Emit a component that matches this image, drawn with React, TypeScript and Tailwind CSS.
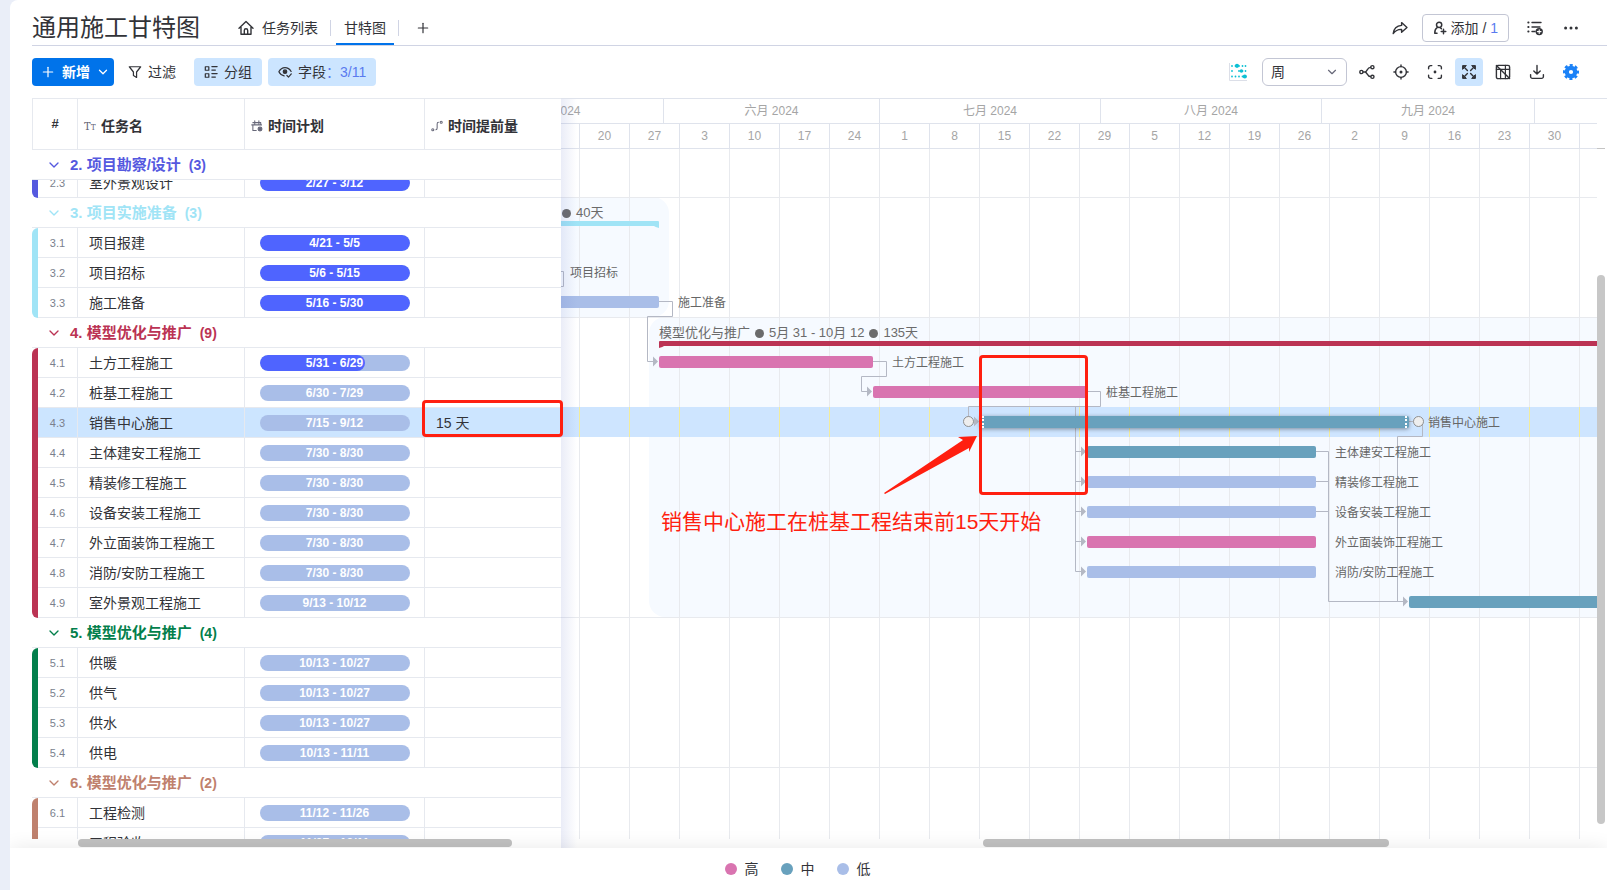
import { Fragment } from "react";
import type { ReactNode } from "react";
import clsx from "clsx";
import { ChevronDown, Plus } from "lucide-react";

type Priority = "high" | "mid" | "low";

type Task = {
  id: string;
  name: string;
  plan: string;
  progress?: number;
  lead?: string;
  selected?: boolean;
};

type Group = {
  title: string;
  count: number;
  text: string;
  strip: string;
  clipped?: boolean;
  tasks: Task[];
};

const groups: Group[] = [
  {
    title: "2. 项目勘察/设计",
    count: 3,
    text: "text-[#5559df]",
    strip: "bg-[#5559df] rounded-bl-md",
    clipped: true,
    tasks: [{ id: "2.3", name: "室外景观设计", plan: "2/27 - 3/12", progress: 100 }],
  },
  {
    title: "3. 项目实施准备",
    count: 3,
    text: "text-[#a0e4f6]",
    strip: "bg-[#a0e4f6] rounded-l-md",
    tasks: [
      { id: "3.1", name: "项目报建", plan: "4/21 - 5/5", progress: 100 },
      { id: "3.2", name: "项目招标", plan: "5/6 - 5/15", progress: 100 },
      { id: "3.3", name: "施工准备", plan: "5/16 - 5/30", progress: 100 },
    ],
  },
  {
    title: "4. 模型优化与推广",
    count: 9,
    text: "text-[#bb3354]",
    strip: "bg-[#bb3354] rounded-l-md",
    tasks: [
      { id: "4.1", name: "土方工程施工", plan: "5/31 - 6/29", progress: 70 },
      { id: "4.2", name: "桩基工程施工", plan: "6/30 - 7/29" },
      { id: "4.3", name: "销售中心施工", plan: "7/15 - 9/12", lead: "15 天", selected: true },
      { id: "4.4", name: "主体建安工程施工", plan: "7/30 - 8/30" },
      { id: "4.5", name: "精装修工程施工", plan: "7/30 - 8/30" },
      { id: "4.6", name: "设备安装工程施工", plan: "7/30 - 8/30" },
      { id: "4.7", name: "外立面装饰工程施工", plan: "7/30 - 8/30" },
      { id: "4.8", name: "消防/安防工程施工", plan: "7/30 - 8/30" },
      { id: "4.9", name: "室外景观工程施工", plan: "9/13 - 10/12" },
    ],
  },
  {
    title: "5. 模型优化与推广",
    count: 4,
    text: "text-[#037f4c]",
    strip: "bg-[#037f4c] rounded-l-md",
    tasks: [
      { id: "5.1", name: "供暖", plan: "10/13 - 10/27" },
      { id: "5.2", name: "供气", plan: "10/13 - 10/27" },
      { id: "5.3", name: "供水", plan: "10/13 - 10/27" },
      { id: "5.4", name: "供电", plan: "10/13 - 11/11" },
    ],
  },
  {
    title: "6. 模型优化与推广",
    count: 2,
    text: "text-[#bf816e]",
    strip: "bg-[#bf816e] rounded-tl-md",
    tasks: [
      { id: "6.1", name: "工程检测", plan: "11/12 - 11/26" },
      { id: "6.2", name: "工程验收", plan: "11/27 - 12/11" },
    ],
  },
];

const months = [
  { label: "五月 2024", width: "w-[220px]" },
  { label: "六月 2024", width: "w-[216px]" },
  { label: "七月 2024", width: "w-[221px]" },
  { label: "八月 2024", width: "w-[221px]" },
  { label: "九月 2024", width: "w-[213px]" },
  { label: "", width: "w-[221px]" },
];

const weeks = [13, 20, 27, 3, 10, 17, 24, 1, 8, 15, 22, 29, 5, 12, 19, 26, 2, 9, 16, 23, 30, 7];

// days are counted from July 1st, rows from the top of the chart body
const dayX = (day: number) => Math.round(319 + (day * 50) / 7);

const bars: {
  name: string;
  from: number;
  to: number;
  top: number;
  priority: Priority;
  selected?: boolean;
}[] = [
  { name: "项目招标", from: -56, to: -46, top: 117, priority: "mid" },
  { name: "施工准备", from: -46, to: -31, top: 147, priority: "low" },
  { name: "土方工程施工", from: -31, to: -1, top: 207, priority: "high" },
  { name: "桩基工程施工", from: -1, to: 29, top: 237, priority: "high" },
  { name: "销售中心施工", from: 14, to: 74, top: 267, priority: "mid", selected: true },
  { name: "主体建安工程施工", from: 29, to: 61, top: 297, priority: "mid" },
  { name: "精装修工程施工", from: 29, to: 61, top: 327, priority: "low" },
  { name: "设备安装工程施工", from: 29, to: 61, top: 357, priority: "low" },
  { name: "外立面装饰工程施工", from: 29, to: 61, top: 387, priority: "high" },
  { name: "消防/安防工程施工", from: 29, to: 61, top: 417, priority: "low" },
  { name: "室外景观工程施工", from: 74, to: 104, top: 447, priority: "mid" },
];

const priorityBg: Record<Priority, string> = {
  high: "bg-[#d974b0]",
  mid: "bg-[#68a1bd]",
  low: "bg-[#a9bee8]",
};

const links = [
  "M-10 122.5H2.5V137.5H-10",
  "M98 152.5H111.5V167.5H86.5V212.5H92",
  "M312 212.5H325.5V227.5H300.5V242.5H306",
  "M526 242.5H539.5V257.5H407.5V272.5H413",
  "M514.5 257.5V422.5H520M514.5 302.5H520M514.5 332.5H520M514.5 362.5H520M514.5 392.5H520",
  "M848 272.5H861.5V287.5H836.5V452.5",
  "M755 302.5H767.5V452.5H842M755 332.5H767.5M755 362.5H767.5",
];

const arrows = [
  [92, 212],
  [306, 242],
  [413, 272],
  [520, 302],
  [520, 332],
  [520, 362],
  [520, 392],
  [520, 422],
  [842, 452],
];

function Icon({ children, className = "size-4" }: { children: ReactNode; className?: string }) {
  return (
    <svg
      viewBox="0 0 16 16"
      className={clsx("shrink-0", className)}
      fill="none"
      stroke="currentColor"
      strokeWidth="1.4"
      strokeLinecap="round"
      strokeLinejoin="round"
      aria-hidden="true"
    >
      {children}
    </svg>
  );
}

function IconButton({
  label,
  active,
  children,
}: {
  label: string;
  active?: boolean;
  children: ReactNode;
}) {
  return (
    <button
      type="button"
      aria-label={label}
      className={clsx(
        "flex size-7 shrink-0 items-center justify-center rounded",
        active && "bg-[#cce5ff]"
      )}
    >
      {children}
    </button>
  );
}

function TopBar() {
  return (
    <header className="flex h-[46px] items-center border-b border-[#d0d4e4] pr-[22px]">
      <h1 className="pt-2.5 text-2xl text-[#323338]">通用施工甘特图</h1>
      <nav className="ml-[38px] flex h-full items-center text-sm">
        <a href="#list" className="flex items-center gap-2 pt-2.5">
          <Icon>
            <path d="M1 8.2 8 1.6l7 6.6M3 7v7.3h10V7M6.3 14v-3.6a1.7 1.7 0 0 1 3.4 0V14" />
          </Icon>
          任务列表
        </a>
        <span className="mt-2.5 ml-3 h-4 w-px bg-[#d0d4e4]" />
        <a
          href="#gantt"
          className="ml-[5px] flex h-full items-center border-b-2 border-[#0073ea] px-2 pt-3"
        >
          甘特图
        </a>
        <span className="mt-2.5 ml-1 h-4 w-px bg-[#d0d4e4]" />
        <button type="button" aria-label="添加视图" className="ml-4 pt-2.5">
          <Plus className="size-4" strokeWidth={1.8} />
        </button>
      </nav>
      <div className="ml-auto flex items-center gap-2 pt-2.5">
        <IconButton label="分享">
          <Icon>
            <path d="M9.6 2.6 15 7.4l-5.4 4.8V9.4C6 9.2 3.4 10.6 1.2 13.6 1.7 9 4.6 5.8 9.6 5.4z" />
          </Icon>
        </IconButton>
        <button
          type="button"
          className="flex h-7 items-center gap-1 rounded border border-[#c3c6d4] px-2.5 text-sm"
        >
          <Icon className="size-3.5">
            <circle cx="7" cy="4.4" r="3" strokeWidth="1.7" />
            <path
              d="M4.8 7.6C2.6 8.8 2 10.4 2 14h2.6M12 9.4v5.2M9.4 12h5.2M8.6 8l1 .8"
              strokeWidth="1.7"
            />
          </Icon>
          <span className="whitespace-nowrap">
            添加 / <span className="text-[#5a7bef]">1</span>
          </span>
        </button>
        <div className="ml-1 flex items-center gap-2">
          <IconButton label="活动记录">
            <Icon>
              <path d="M5 2.5h9M5 7h8M5 11.5h3" />
              <path d="M1.2 2.5h.4M1.2 7h.4M1.2 11.5h.4" strokeWidth="1.8" />
              <circle cx="12.2" cy="11.6" r="3.7" fill="currentColor" stroke="none" />
              <path d="M12.2 9.8v3.6M10.4 11.6H14" stroke="#fff" strokeWidth="1.1" />
            </Icon>
          </IconButton>
          <IconButton label="更多">
            <Icon>
              <g fill="currentColor" stroke="none">
                <circle cx="2.6" cy="8" r="1.5" />
                <circle cx="8" cy="8" r="1.5" />
                <circle cx="13.4" cy="8" r="1.5" />
              </g>
            </Icon>
          </IconButton>
        </div>
      </div>
    </header>
  );
}

function Toolbar() {
  return (
    <div className="flex items-center gap-1.5 py-3 pr-[22px] text-sm whitespace-nowrap">
      <button
        type="button"
        className="flex h-7 items-center gap-1.5 rounded bg-[#0073ea] px-2 pr-1 font-bold text-white"
      >
        <Plus className="size-4" strokeWidth={1.8} />
        新增
        <ChevronDown className="size-3.5" strokeWidth={2.2} />
      </button>
      <button type="button" className="flex h-7 items-center gap-1.5 px-2">
        <Icon className="size-3.5">
          <path d="M1.5 2h13L9.8 8v6.2L6.2 12V8z" />
        </Icon>
        过滤
      </button>
      <button
        type="button"
        className="ml-1 flex h-7 items-center gap-1.5 rounded bg-[#cce5ff] px-2.5"
      >
        <Icon className="size-3.5">
          <path d="M1.5 2h4v4h-4zM1.5 10h4v4h-4zM9 1.8h6M9 5.8h4M9 9.8h6M9 13.8h4" />
        </Icon>
        分组
      </button>
      <button type="button" className="flex h-7 items-center gap-1.5 rounded bg-[#cce5ff] px-2.5">
        <Icon className="size-3.5">
          <path d="M15 7.4C13.4 4.6 11 3 8 3S2.6 4.6 1 7.8c1.4 2.7 3.5 4.2 6 4.6" />
          <circle cx="8" cy="7.6" r="2" fill="currentColor" />
          <path d="m10.2 12 1.8 1.8 3.2-3.6" />
        </Icon>
        <span>
          字段<span className="text-[#5a7bef]">：3/11</span>
        </span>
      </button>

      <div className="ml-auto flex items-center gap-1.5">
        <IconButton label="基线">
          <svg viewBox="0 0 18 18" className="size-[18px]" fill="#0bc0d4" aria-hidden="true">
            <path d="M.5 0v17.5H18" fill="none" stroke="#dcdfe8" />
            {[3, 8, 13.5].map((y) =>
              [3, 6.5, 10, 13.5, 16.5].map((x) => (
                <circle key={`${x}-${y}`} cx={x} cy={y} r={x === 6.5 && y === 8 ? 0 : 0.9} />
              ))
            )}
            <circle cx="8" cy="2.8" r="2.1" />
            <circle cx="12.4" cy="8" r="1.8" />
            <circle cx="15.8" cy="13.5" r="2.1" />
          </svg>
        </IconButton>
        <label className="relative ml-1 flex items-center">
          <select
            aria-label="时间刻度"
            defaultValue="week"
            className="h-7 w-[85px] appearance-none rounded-md border border-[#c3c6d4] bg-white px-2 text-sm"
          >
            <option value="week">周</option>
            <option value="month">月</option>
          </select>
          <ChevronDown className="pointer-events-none absolute right-2 size-3.5 text-[#676879]" />
        </label>
        <IconButton label="依赖">
          <Icon>
            <circle cx="2.4" cy="8" r="1.6" />
            <circle cx="13.4" cy="3.2" r="1.6" />
            <circle cx="13.4" cy="12.8" r="1.6" />
            <path d="M4.200 8H6M11.600 3.400C8 3.400 8.200 8 6 8c2.200 0 2 4.600 5.600 4.600" />
          </Icon>
        </IconButton>
        <IconButton label="今天">
          <Icon>
            <circle cx="8" cy="8" r="5.4" />
            <circle cx="8" cy="8" r=".8" fill="currentColor" />
            <path d="M8 .9v1.7M8 13.4v1.7M.9 8h1.7M13.4 8h1.7" />
          </Icon>
        </IconButton>
        <IconButton label="聚焦">
          <Icon>
            <path d="M4.8 1.6H3.6a2 2 0 0 0-2 2v1.2M11.2 1.6h1.2a2 2 0 0 1 2 2v1.2M4.8 14.4H3.600a2 2 0 0 1-2-2v-1.200M11.200 14.400h1.200a2 2 0 0 0 2-2v-1.200" />
            <circle cx="8" cy="8" r=".7" fill="currentColor" />
          </Icon>
        </IconButton>
        <IconButton label="自适应" active>
          <Icon>
            <g fill="currentColor" strokeWidth="1">
              <path d="M1.6 5V1.6H5zM11 1.6h3.4V5zM14.4 11v3.4H11zM5 14.4H1.6V11z" />
            </g>
            <path d="m3 3 3.4 3.4M13 3 9.6 6.4M13 13 9.600 9.600M3 13l3.400-3.400" />
          </Icon>
        </IconButton>
        <IconButton label="隐藏表格">
          <Icon>
            <rect x="1.400" y="1.400" width="13.200" height="13.200" rx="1.600" />
            <path d="M1.400 5.400h13.200M5.600 5.400v9.200M10.400 1.400v13.200" strokeWidth="1.200" />
            <path d="m1.400 1.400 13.200 13.200" />
          </Icon>
        </IconButton>
        <IconButton label="导出">
          <Icon>
            <path d="M8 1.5v8.3M4.8 6.900 8 10.100l3.200-3.200M1.600 10.600v2a1.800 1.800 0 0 0 1.800 1.800h9.200a1.800 1.800 0 0 0 1.800-1.800v-2" />
          </Icon>
        </IconButton>
        <IconButton label="设置">
          <svg viewBox="0 0 16 16" className="size-4 text-[#1b82f7]" aria-hidden="true">
            <circle
              cx="8"
              cy="8"
              r="6.7"
              fill="none"
              stroke="currentColor"
              strokeWidth="2.6"
              strokeDasharray="3 2.262"
              strokeDashoffset="1.5"
            />
            <circle cx="8" cy="8" r="4.2" fill="none" stroke="currentColor" strokeWidth="4.2" />
          </svg>
        </IconButton>
      </div>
    </div>
  );
}

function PlanPill({ plan, progress = 0 }: { plan: string; progress?: number }) {
  return (
    <div className="relative mx-auto h-4 w-[150px] overflow-hidden rounded-full bg-[#a9bee8]">
      <div className="h-full rounded-full bg-[#4f64ff]" style={{ width: `${progress}%` }} />
      <span className="absolute inset-0 text-center text-xs leading-4 font-bold text-white">
        {plan}
      </span>
    </div>
  );
}

function TaskTable() {
  return (
    <table className="w-full table-fixed border-separate border-spacing-0 text-sm">
      <colgroup>
        <col className="w-1.5" />
        <col className="w-10" />
        <col className="w-[167px]" />
        <col className="w-[180px]" />
        <col />
      </colgroup>
      <thead>
        <tr className="h-[52px] text-left">
          <th
            colSpan={2}
            className="border border-[#e6e9ef] text-center text-[13px] text-[#323338]"
          >
            #
          </th>
          <th className="border-y border-r border-[#e6e9ef] pt-1 pl-1.5">
            <span className="flex items-center gap-[5px]">
              <span className="flex w-3 items-baseline font-serif text-xs font-normal text-[#676879]">
                T<span className="text-[9px]">T</span>
              </span>
              任务名
            </span>
          </th>
          <th className="border-y border-r border-[#e6e9ef] pt-1 pl-1.5">
            <span className="flex items-center gap-[5px]">
              <Icon className="size-3 text-[#676879]">
                <path d="M1 6.500h13M2.500 3.500H13v3M2.500 6.500V14H7M5 1v4M10.500 1v4" />
                <circle cx="12" cy="12" r="2.600" fill="currentColor" />
              </Icon>
              时间计划
            </span>
          </th>
          <th className="border-y border-[#e6e9ef] pt-1 pl-1.5">
            <span className="flex items-center gap-[5px]">
              <Icon className="size-3 text-[#676879]">
                <circle cx="2.400" cy="13" r="1.400" />
                <circle cx="13.600" cy="3" r="1.400" />
                <path d="M6.500 13c1.600 0 1.700-.8 1.700-2.200V5.200C8.200 3.800 8.300 3 9.900 3" />
              </Icon>
              时间提前量
            </span>
          </th>
        </tr>
      </thead>
      <tbody>
        {groups.map((group) => (
          <Fragment key={group.title}>
            <tr className={clsx("h-[30px]", group.text)}>
              <th colSpan={5} className="border-b border-[#e6e9ef] p-0 pl-3.5 text-left">
                <button
                  type="button"
                  className="flex items-center gap-2 text-[15px] leading-5 font-bold"
                >
                  <ChevronDown className="size-4" strokeWidth={2} />
                  <span className="flex gap-2">
                    {group.title}
                    <span className="text-sm leading-5">({group.count})</span>
                  </span>
                </button>
              </th>
            </tr>
            {group.tasks.map((task, idx) => (
              <tr key={task.id} className={group.clipped ? "h-[18px]" : "h-[30px]"}>
                {idx === 0 && (
                  <td rowSpan={group.tasks.length} className={clsx("p-0", group.strip)} />
                )}
                {[
                  <span className="block w-full pt-0.5 text-center text-[11px] text-[#7a7f8d]">
                    {task.id}
                  </span>,
                  <span className="block pl-[11px] text-[#323338]">{task.name}</span>,
                  <PlanPill plan={task.plan} progress={task.progress} />,
                  <span className="block pl-[11px] text-[#323338]">{task.lead}</span>,
                ].map((cell, col) => (
                  <td
                    key={col}
                    className={clsx(
                      "border-b border-[#e6e9ef] p-0",
                      col < 3 && "border-r",
                      task.selected && "bg-[#cce5ff]"
                    )}
                  >
                    {group.clipped ? (
                      <div className="flex h-[17px] items-end overflow-hidden">
                        <div className="flex h-[29px] w-full shrink-0 items-center">{cell}</div>
                      </div>
                    ) : (
                      cell
                    )}
                  </td>
                ))}
              </tr>
            ))}
          </Fragment>
        ))}
      </tbody>
    </table>
  );
}

function TimelineHeader() {
  return (
    <div className="text-xs text-[#a5a5a5]">
      <div className="-ml-[118px] flex h-[25px] border-b border-[#dfe3ec]">
        {months.map((month, idx) => (
          <div
            key={idx}
            className={clsx(
              "flex shrink-0 items-center justify-center border-l border-[#dfe3ec]",
              month.width
            )}
          >
            {month.label}
          </div>
        ))}
      </div>
      <div className="-ml-[32px] flex h-[25px] border-b border-[#dfe3ec]">
        {weeks.map((day, idx) => (
          <div
            key={idx}
            className="flex w-[50px] shrink-0 items-center justify-center border-l border-[#dfe3ec]"
          >
            {day}
          </div>
        ))}
      </div>
    </div>
  );
}

function Dot() {
  return <i className="size-[9px] rounded-full bg-[#6b6b6b]" />;
}

function Chart() {
  return (
    <div className="relative flex-1 overflow-hidden">
      {/* group areas */}
      <div className="absolute top-[48px] -left-4 h-[120px] w-[124px] rounded-2xl bg-[#f6faff]" />
      <div className="absolute top-[168px] right-0 left-[88px] h-[300px] rounded-l-2xl bg-[#f6faff]" />

      {/* week lines */}
      <div className="absolute inset-0 bg-[linear-gradient(to_right,#e8eaee_1px,transparent_1px)] bg-[size:50px_100%] bg-[position:18px_0]" />
      <div className="absolute inset-x-0 top-[258px] h-[30px] bg-[#cee5ff]">
        <div className="h-full bg-[linear-gradient(to_right,#f3ec9c_1px,transparent_1px)] bg-[size:50px_100%] bg-[position:18px_0]" />
      </div>
      {[48, 168, 468, 618].map((top) => (
        <div key={top} className="absolute inset-x-0 h-px bg-[#e8eaee]" style={{ top }} />
      ))}

      {/* dependencies and group summaries */}
      <svg className="absolute inset-0 size-full" aria-hidden="true">
        <g fill="none" stroke="#b4b8c4">
          {links.map((d) => (
            <path key={d} d={d} />
          ))}
        </g>
        <g fill="#b4b8c4">
          {arrows.map(([x, y]) => (
            <path key={`${x}-${y}`} d={`M${x} ${y - 4.5}l5 5-5 5z`} />
          ))}
        </g>
        <path d="M-10 72H97q1 0 1 1V79q-4-1-5-2H-10z" fill="#a0e4f6" />
        <path d="M99 192H2000V197H103q-1 1-5 2V193q0-1 1-1z" fill="#bb3354" />
      </svg>

      {bars.map((bar) => {
        const left = dayX(bar.from);
        const right = dayX(bar.to);
        return (
          <Fragment key={bar.name}>
            <div
              className={clsx(
                "absolute flex h-3 justify-between rounded-xs px-0.5",
                priorityBg[bar.priority],
                bar.selected && "shadow-[0_1px_4px_rgba(0,0,0,0.4)]"
              )}
              style={{ left, top: bar.top, width: right - left }}
            >
              {bar.selected && (
                <>
                  <i className="border-l-2 border-dotted border-white" />
                  <i className="border-l-2 border-dotted border-white" />
                </>
              )}
            </div>
            <span
              className="absolute text-xs leading-3 whitespace-nowrap text-[#666]"
              style={{ left: right + 19, top: bar.top + 1 }}
            >
              {bar.name}
            </span>
          </Fragment>
        );
      })}
      <i className="absolute top-[267px] left-[402px] size-[11px] rounded-full border border-[#8f8f8f] bg-[#eee]" />
      <i className="absolute top-[267px] left-[852px] size-[11px] rounded-full border border-[#8f8f8f] bg-[#eee]" />

      <div className="absolute top-[56px] left-px flex items-center gap-[5px] text-[13px] leading-4 text-[#6b6b6b]">
        <Dot />
        40天
      </div>
      <div className="absolute top-[176px] left-[98px] flex items-center gap-[5px] text-[13px] leading-4 whitespace-nowrap text-[#6b6b6b]">
        模型优化与推广
        <Dot />
        5月 31 - 10月 12
        <Dot />
        135天
      </div>
    </div>
  );
}

function Annotations() {
  return (
    <div className="pointer-events-none absolute inset-0 z-20 overflow-hidden">
      <div className="absolute top-[302px] left-[390px] h-[37px] w-[141px] rounded-sm border-3 border-[#ff1f10]" />
      <div className="absolute top-[257px] left-[947px] h-[140px] w-[109px] rounded-sm border-3 border-[#ff1f10]" />
      <svg className="absolute top-[337px] left-[851px] h-[61px] w-[95px]" aria-hidden="true">
        <path d="M94 1 75 2l5 3L1 58l1 1 84-46v4z" fill="#ff1f10" />
      </svg>
      <p className="absolute top-[410px] left-[629px] text-[21px] leading-7 whitespace-nowrap text-[#ff1f10]">
        销售中心施工在桩基工程结束前15天开始
      </p>
    </div>
  );
}

function Legend() {
  const items = [
    { label: "高", color: "bg-[#d974b0]" },
    { label: "中", color: "bg-[#68a1bd]" },
    { label: "低", color: "bg-[#a9bee8]" },
  ];

  return (
    <footer className="relative z-10 flex h-[42px] items-center justify-center gap-[22px] bg-white pr-[22px] text-sm shadow-[0_0_20px_rgba(0,0,0,0.09)]">
      {items.map((item) => (
        <span key={item.label} className="flex items-center gap-2">
          <i className={clsx("size-3 rounded-full", item.color)} />
          {item.label}
        </span>
      ))}
    </footer>
  );
}

export default function App() {
  return (
    <div className="h-screen bg-[#eaeef8] pl-2.5 font-['Liberation_Sans','Noto_Sans_CJK_SC',sans-serif] text-[#323338]">
      <div className="flex h-full flex-col overflow-hidden rounded-tl-lg bg-white">
        <div className="pl-[22px]">
          <TopBar />
          <Toolbar />
        </div>

        <main className="relative ml-[22px] flex min-h-0 flex-1">
          <section className="flex w-[529px] shrink-0 flex-col">
            <div className="min-h-0 flex-1 overflow-hidden">
              <TaskTable />
            </div>
            <div className="h-[9px] pl-[46px]">
              <div className="h-2 w-[434px] rounded-full bg-[#c1c1c1]" />
            </div>
          </section>

          <section className="relative flex min-w-0 flex-1 border-t border-[#dfe3ec]">
            <div className="flex min-w-0 flex-1 flex-col overflow-hidden">
              <TimelineHeader />
              <Chart />
              <div className="h-[9px] pl-[422px]">
                <div className="h-2 w-[406px] rounded-full bg-[#c1c1c1]" />
              </div>
            </div>
            <div className="w-2.5 shrink-0">
              <div className="h-[50px] w-2 border-b border-[#c4c4c4]" />
              <div className="mt-[126px] h-[549px] w-2 rounded-full bg-[#c7c7c7]" />
            </div>
            {/* shade along the frozen columns */}
            <div className="pointer-events-none absolute inset-y-0 left-0 w-4 bg-linear-to-r from-[#5064be]/12 to-transparent" />
          </section>

          <Annotations />
        </main>

        <Legend />
      </div>
    </div>
  );
}
